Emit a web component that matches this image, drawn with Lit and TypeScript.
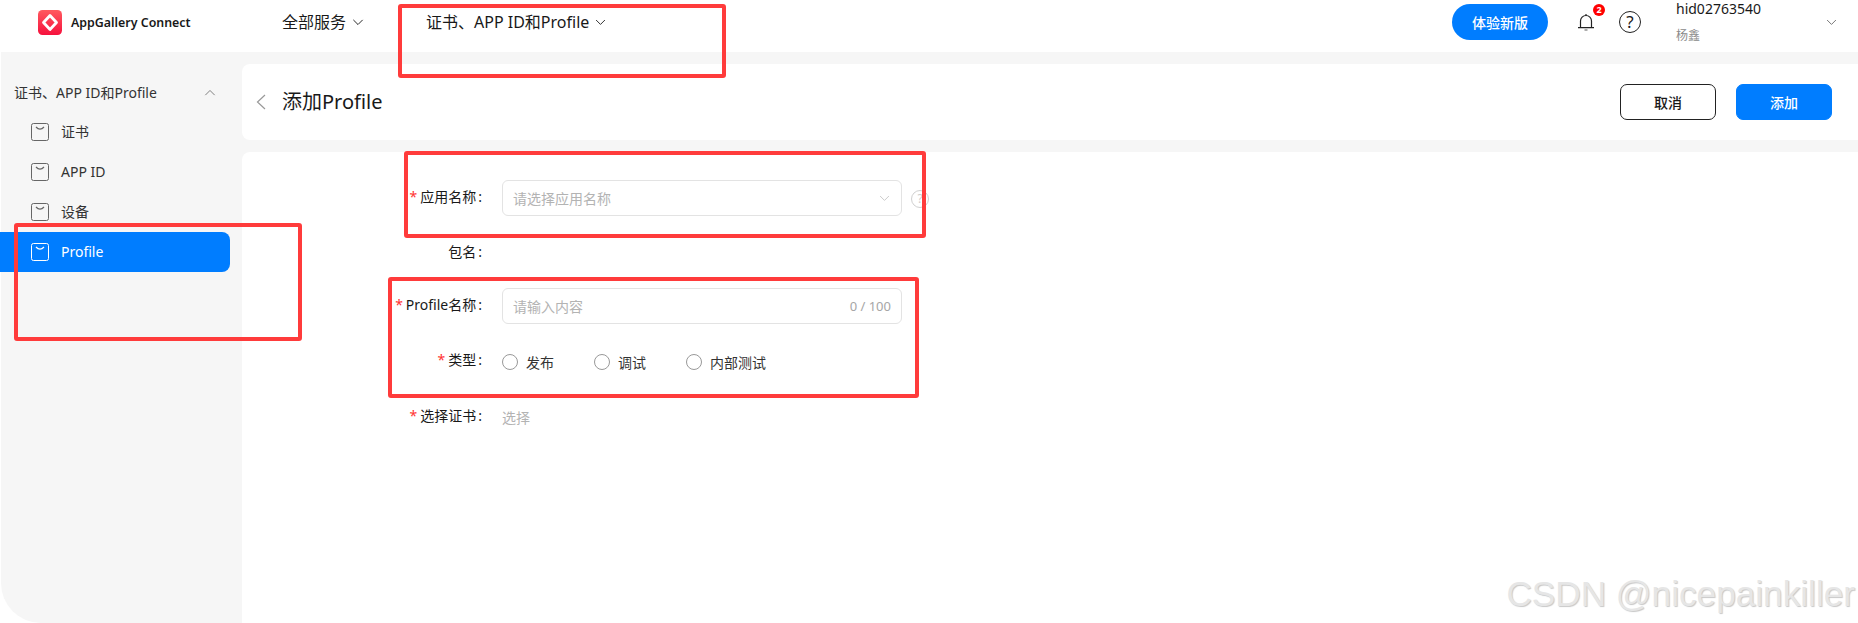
import { LitElement, html, css, svg } from 'lit';
import { customElement } from 'lit/decorators.js';

const chevron = (w: number, up = false) => html`
  <svg class="chev" width=${w} height=${Math.round(w * 0.6)} viewBox="0 0 20 12" fill="none" stroke="currentColor" stroke-width="1.6">
    ${up ? svg`<path d="M2 10.5 10 2.5 18 10.5" />` : svg`<path d="M2 1.5 10 9.5 18 1.5" />`}
  </svg>`;

const navIcon = html`
  <svg class="nav-icon" width="18" height="18" viewBox="0 0 18 18" fill="none" stroke="currentColor">
    <rect x="0.5" y="0.5" width="17" height="17" rx="2" />
    <path d="M5 4Q9 8.4 13 4" stroke-width="1.2" />
  </svg>`;

const menu = ['证书', 'APP ID', '设备', 'Profile'];

@customElement('app-root')
export class AppRoot extends LitElement {
  static styles = css`
    :host {
      display: block;
      position: relative;
      width: 1858px;
      height: 623px;
      overflow: hidden;
      background: #fff;
      color: #191919;
      font-family: "Noto Sans", "Noto Sans CJK SC", sans-serif;
      font-size: 14px;
    }

    .header {
      display: flex;
      align-items: center;
      height: 44px;
      padding: 0 0 8px 38px;
      background: #fff;
    }
    .logo {
      width: 24px;
      height: 25px;
      flex: none;
    }
    .brand {
      width: 211px;
      margin-left: 9px;
      font-size: 12.4px;
      font-weight: 600;
      white-space: nowrap;
    }
    .menu {
      display: flex;
      align-items: center;
      gap: 6px;
      font-size: 16px;
      line-height: 24px;
      white-space: nowrap;
    }
    .menu.all {
      width: 144px;
    }
    .spacer {
      flex: 1;
    }
    .try {
      width: 96px;
      height: 36px;
      border: 0;
      border-radius: 18px;
      background: #007dff;
      color: #fff;
      font: 500 14px "Noto Sans", "Noto Sans CJK SC", sans-serif;
    }
    .bell-wrap {
      position: relative;
      width: 18px;
      height: 18px;
      margin: 0 24px 0 29px;
    }
    .badge {
      position: absolute;
      top: -9px;
      left: 16px;
      width: 12px;
      height: 12px;
      border-radius: 50%;
      background: #f00;
      color: #fff;
      font-size: 9px;
      font-weight: 700;
      line-height: 12px;
      text-align: center;
    }
    .help {
      width: 20px;
      height: 20px;
      border: 1px solid #222;
      border-radius: 50%;
      font-size: 17px;
      line-height: 20px;
      text-align: center;
    }
    .user {
      align-self: flex-start;
      width: 150px;
      margin-left: 35px;
    }
    .user .id {
      height: 18px;
      line-height: 18px;
      font-size: 14px;
    }
    .user .real {
      margin-top: 9px;
      line-height: 18px;
      font-size: 12px;
      color: #8a8a8a;
    }
    .user-chev {
      display: flex;
      width: 32px;
      color: #666;
    }

    .body {
      display: flex;
      height: 571px;
      background: #f6f6f6;
    }
    .wrap {
      flex: none;
      width: 242px;
      background: #fff;
    }
    .sidebar {
      width: 241px;
      height: 571px;
      margin-left: 1px;
      padding-top: 20px;
      box-sizing: border-box;
      background: #f6f6f6;
      border-bottom-left-radius: 40px;
    }
    .group {
      display: flex;
      align-items: center;
      justify-content: space-between;
      height: 40px;
      padding: 0 26px 0 13px;
      color: #333;
      white-space: nowrap;
    }
    .group .chev {
      color: #777;
    }
    .item {
      display: flex;
      align-items: center;
      gap: 12px;
      height: 40px;
      width: 230px;
      margin-left: -1px;
      padding-left: 31px;
      box-sizing: border-box;
      border-radius: 0 8px 8px 0;
      color: #333;
    }
    .item span {
      margin-bottom: 2px;
    }
    .item .nav-icon {
      color: #666;
      margin-bottom: 1px;
    }
    .item.active {
      background: #007dff;
      color: #fff;
    }
    .item.active .nav-icon {
      color: #fff;
    }

    .main {
      flex: 1;
      display: flex;
      flex-direction: column;
      gap: 12px;
      padding-top: 12px;
    }
    .title-card {
      display: flex;
      align-items: center;
      height: 76px;
      padding: 0 26px 0 14px;
      background: #fff;
      border-radius: 8px 0 0 8px;
    }
    .back {
      width: 10px;
      height: 16px;
      margin-right: 16px;
      flex: none;
    }
    .title-card h1 {
      flex: 1;
      margin: -4px 0 0;
      font-size: 20px;
      font-weight: 400;
    }
    .btn {
      width: 96px;
      height: 36px;
      margin-left: 20px;
      box-sizing: border-box;
      border-radius: 7px;
      border: 1px solid #222;
      background: #fff;
      color: #191919;
      font: 500 14px "Noto Sans", "Noto Sans CJK SC", sans-serif;
    }
    .btn.primary {
      border-color: #007dff;
      background: #007dff;
      color: #fff;
    }

    .form-card {
      flex: 1;
      padding-top: 28px;
      background: #fff;
      border-radius: 8px 0 0 0;
    }
    .row {
      display: flex;
      height: 36px;
      margin-bottom: 18px;
      align-items: center;
    }
    .label {
      width: 240px;
      margin-right: 20px;
      margin-top: -4px;
      text-align: right;
      white-space: nowrap;
    }
    .label.low {
      margin-top: -2px;
    }
    .label.lower {
      margin-top: 2px;
    }
    .label i {
      margin-right: 3px;
      color: #f33;
      font-style: normal;
    }
    .label b {
      margin-left: 2px;
      font-weight: 400;
    }
    .input {
      display: flex;
      align-items: center;
      justify-content: space-between;
      width: 400px;
      height: 36px;
      padding: 0 10px;
      box-sizing: border-box;
      border: 1px solid #e3e3e3;
      border-radius: 6px;
      color: #b3b3b3;
    }
    .input .chev {
      color: #c4c4c4;
      margin-right: 1px;
    }
    .count {
      font-size: 13px;
      color: #a6a6a6;
    }
    .hint {
      width: 16px;
      height: 16px;
      margin: 1px 0 0 9px;
      border: 1px solid #d0d0d0;
      border-radius: 50%;
      color: #ccc;
      font-size: 12px;
      line-height: 16px;
      text-align: center;
    }
    .radios {
      display: flex;
      margin-top: 4px;
      color: #333;
    }
    .radio {
      display: flex;
      align-items: center;
      gap: 8px;
      margin-right: 40px;
    }
    .radio span {
      width: 14px;
      height: 14px;
      border: 1px solid #999;
      border-radius: 50%;
      flex: none;
    }
    .pick {
      margin-top: 6px;
      color: #b3b3b3;
    }

    .mark {
      position: absolute;
      box-sizing: border-box;
      border: 4px solid #ff3b3b;
      border-radius: 3px;
      pointer-events: none;
    }
    .m1 { left: 398px; top: 4px; width: 328px; height: 74px; }
    .m2 { left: 404px; top: 151px; width: 522px; height: 87px; }
    .m3 { left: 388px; top: 277px; width: 531px; height: 121px; }
    .m4 { left: 14px; top: 223px; width: 288px; height: 118px; }

    .watermark {
      position: absolute;
      right: 3px;
      top: 572px;
      font-family: "Liberation Sans", sans-serif;
      font-size: 35.2px;
      line-height: 44px;
      white-space: nowrap;
      color: #e6e6e6;
      text-shadow: 1px 1px 1px #c8c8c8;
      pointer-events: none;
    }
  `;

  render() {
    return html`
      <div class="header">
        <svg class="logo" viewBox="0 0 24 25">
          <defs>
            <linearGradient id="lg" x1="0" y1="0" x2="0" y2="1">
              <stop offset="0" stop-color="#ff5a5f" />
              <stop offset="1" stop-color="#f6113d" />
            </linearGradient>
          </defs>
          <rect width="24" height="25" rx="4.5" fill="url(#lg)" />
          <path d="M12 5.5 18.5 12.5 12 19.5 5.5 12.5Z" fill="none" stroke="#fff" stroke-width="2.8" stroke-linejoin="round" />
        </svg>
        <div class="brand">AppGallery Connect</div>
        <div class="menu all">全部服务 ${chevron(12)}</div>
        <div class="menu">证书、APP ID和Profile ${chevron(11)}</div>
        <div class="spacer"></div>
        <button class="try">体验新版</button>
        <div class="bell-wrap">
          <svg width="18" height="18" viewBox="0 0 18 18" fill="none" stroke="#222" stroke-width="1.2">
            <path d="M3.5 14.5V8a5.5 5.5 0 0 1 11 0v6.5M1 14.7h16" />
            <path d="M7.5 17h3" stroke="#777" />
            <path d="M9 1v1.4" />
          </svg>
          <div class="badge">2</div>
        </div>
        <div class="help">?</div>
        <div class="user">
          <div class="id">hid02763540</div>
          <div class="real">杨鑫</div>
        </div>
        <div class="user-chev">${chevron(11)}</div>
      </div>

      <div class="body">
        <div class="wrap">
          <div class="sidebar">
            <div class="group"><span>证书、APP ID和Profile</span>${chevron(12, true)}</div>
            ${menu.map(
              (m) => html`<div class="item ${m === 'Profile' ? 'active' : ''}">${navIcon}<span>${m}</span></div>`
            )}
          </div>
        </div>
        <div class="main">
          <div class="title-card">
            <svg class="back" viewBox="0 0 10 16" fill="none" stroke="#999" stroke-width="1.2">
              <path d="M9 1 1.5 8 9 15" />
            </svg>
            <h1>添加Profile</h1>
            <button class="btn">取消</button>
            <button class="btn primary">添加</button>
          </div>
          <div class="form-card">
            <div class="row">
              <div class="label"><i>*</i>应用名称<b>:</b></div>
              <div class="input"><span>请选择应用名称</span>${chevron(11)}</div>
              <div class="hint">?</div>
            </div>
            <div class="row">
              <div class="label low">包名<b>:</b></div>
            </div>
            <div class="row">
              <div class="label"><i>*</i>Profile名称<b>:</b></div>
              <div class="input"><span>请输入内容</span><span class="count">0 / 100</span></div>
            </div>
            <div class="row">
              <div class="label low"><i>*</i>类型<b>:</b></div>
              <div class="radios">
                <div class="radio"><span></span>发布</div>
                <div class="radio"><span></span>调试</div>
                <div class="radio"><span></span>内部测试</div>
              </div>
            </div>
            <div class="row">
              <div class="label lower"><i>*</i>选择证书<b>:</b></div>
              <div class="pick">选择</div>
            </div>
          </div>
        </div>
      </div>

      <div class="mark m1"></div>
      <div class="mark m2"></div>
      <div class="mark m3"></div>
      <div class="mark m4"></div>
      <div class="watermark">CSDN @nicepainkiller</div>
    `;
  }
}
